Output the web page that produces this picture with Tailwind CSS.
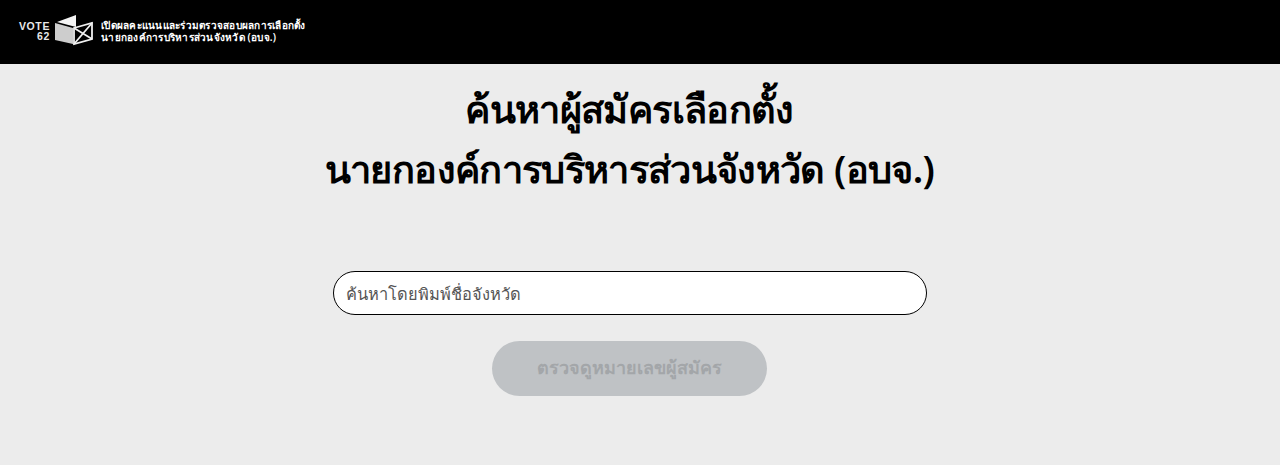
<!DOCTYPE html>
<html lang="th">
<head>
    <meta charset="UTF-8">
    <meta name="viewport" content="width=device-width, initial-scale=1.0">
    <title>ค้นหาผู้สมัครเลือกตั้ง</title>
    <script src="https://cdn.jsdelivr.net/npm/@tailwindcss/browser@4"></script>
</head>
<body class="bg-[#ececec] font-['Noto_Sans','DejaVu_Sans',sans-serif] h-[465px] overflow-hidden">
    <!-- Header -->
    <header class="bg-black h-[64px] flex items-center pl-[20px] pb-[2px]">
        <div class="flex flex-col items-end text-[#e8e8e8] font-['Liberation_Sans',sans-serif] font-bold leading-[10px] text-[10.5px] tracking-[0.6px] w-[30px]">
            <span>VOTE</span>
            <span>62</span>
        </div>
        <svg class="ml-[4px] mb-[2px] w-[39px] h-[32px]" viewBox="0 0 39 32">
            <!-- ballot box: flap, front face, crossed side -->
            <path d="M3 8 L22 1 L22 13 Z" fill="#f4f4f4"/>
            <path d="M1 9 L19 14 L19 30 L1 26 Z" fill="#cdcdcd"/>
            <path d="M20 14 L38 9 L38 25 L20 30 Z" fill="none" stroke="#efefef" stroke-width="1.8"/>
            <path d="M20 14 L38 25 M38 9 L20 30" stroke="#efefef" stroke-width="1.8"/>
        </svg>
        <div class="ml-[8px] text-white font-semibold text-[10px] tracking-[0.25px] leading-[12px]">
            <p>เปิดผลคะแนนและร่วมตรวจสอบผลการเลือกตั้ง</p>
            <p>นายกองค์การบริหารส่วนจังหวัด (อบจ.)</p>
        </div>
    </header>

    <main class="w-[1259px] flex flex-col items-center">
        <h1 class="mt-[14px] text-center text-black font-semibold text-[38px] leading-[60px] tracking-[-0.65px]">
            ค้นหาผู้สมัครเลือกตั้ง<br>นายกองค์การบริหารส่วนจังหวัด (อบจ.)
        </h1>
        <input type="text" placeholder="ค้นหาโดยพิมพ์ชื่อจังหวัด" class="mt-[73px] w-[594px] h-[44px] bg-white border border-black rounded-full pl-[12px] pr-4 text-[16.4px] text-[#555] placeholder:text-[#555] outline-none">
        <button disabled class="mt-[26px] w-[275px] h-[55px] pb-[2px] rounded-full bg-[#bfc2c5] text-[#a3a6a9] font-semibold text-[18px]">ตรวจดูหมายเลขผู้สมัคร</button>
    </main>
</body>
</html>
